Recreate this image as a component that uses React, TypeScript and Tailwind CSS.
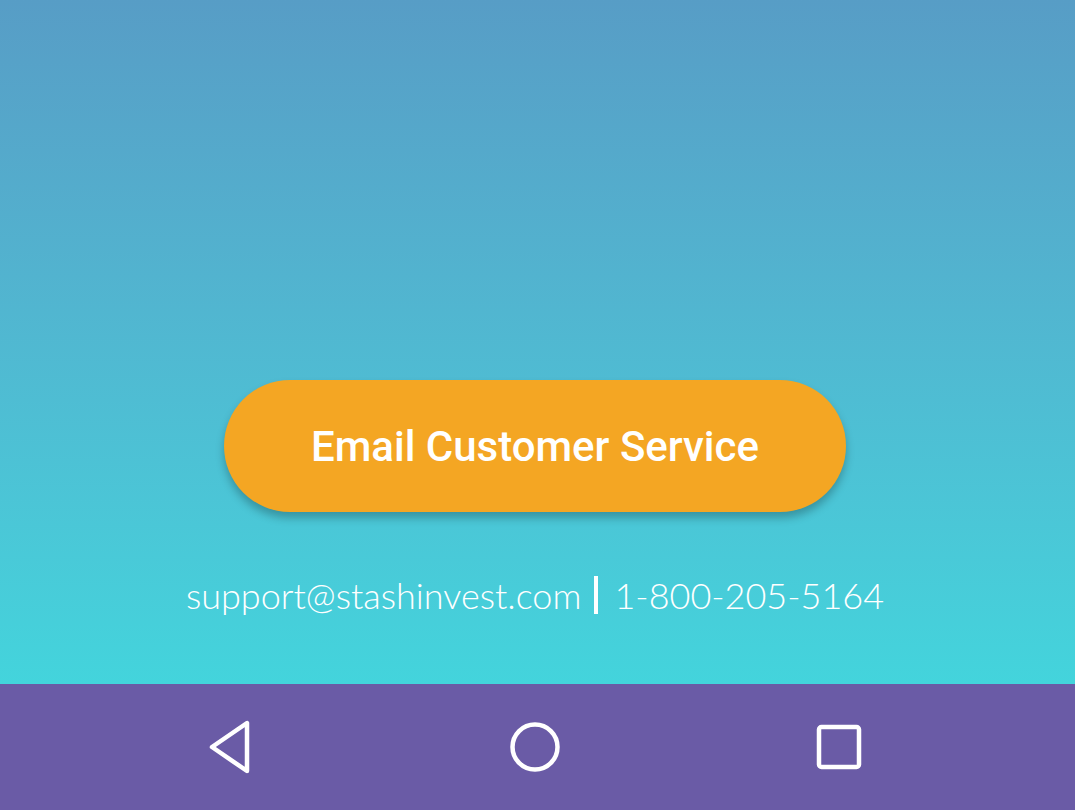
import React from "react";

export default function App() {
  return (
    <div className="w-[1075px] h-[810px] flex flex-col overflow-hidden">
      <div className="flex-1 flex flex-col items-center bg-gradient-to-b from-[#579dc6] to-[#43d4dc]">
        <div className="h-[380px]" />
        <button
          className="mr-[5px] w-[622px] h-[132px] rounded-full bg-[#f4a623] text-white text-[42px] font-medium shadow-[0_6px_8px_rgba(0,0,0,0.25)] flex items-center justify-center"
          style={{ fontFamily: "Roboto, sans-serif" }}
        >
          Email Customer Service
        </button>
        <div
          className="mt-[64px] mr-[5px] flex items-center text-white text-[36px] font-light leading-none"
          style={{ fontFamily: "Lato, sans-serif" }}
        >
          <span>support@stashinvest.com</span>
          <span className="ml-[13px] mr-[16px] w-[4px] h-[38px] bg-white" />
          <span>1-800-205-5164</span>
        </div>
      </div>
      <div className="h-[126px] bg-[#6a5ba6] flex items-center pl-[182px]">
        <div className="w-[100px] flex justify-center">
          <svg width="46" height="54" viewBox="0 0 46 54" fill="none">
            <path
              d="M39 3 L39 51 L4 27 Z"
              stroke="white"
              strokeWidth="4.5"
              strokeLinejoin="round"
              transform="translate(-1 0)"
            />
          </svg>
        </div>
        <div className="ml-[203px] w-[100px] flex justify-center">
          <svg width="54" height="54" viewBox="0 0 54 54" fill="none">
            <circle cx="27" cy="27" r="22.5" stroke="white" strokeWidth="4.5" />
          </svg>
        </div>
        <div className="ml-[204px] w-[100px] flex justify-center">
          <svg width="48" height="48" viewBox="0 0 48 48" fill="none">
            <rect x="4" y="4" width="40" height="40" rx="2.5" stroke="white" strokeWidth="4.5" />
          </svg>
        </div>
      </div>
    </div>
  );
}
